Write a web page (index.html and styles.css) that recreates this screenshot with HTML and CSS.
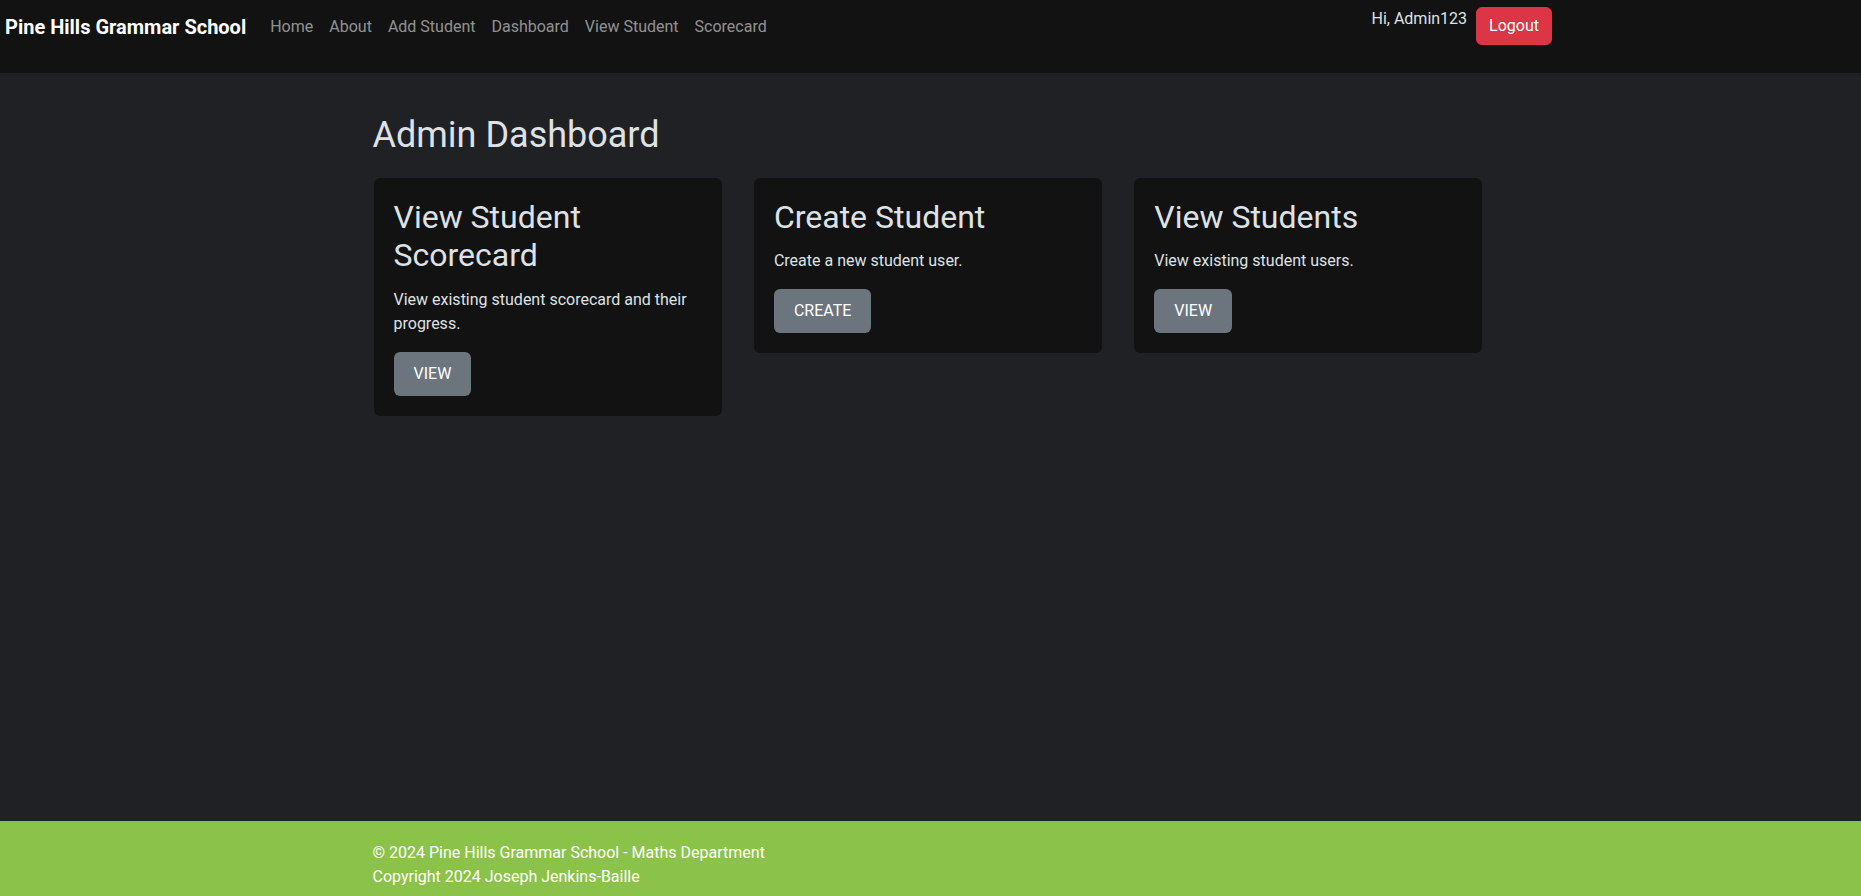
FILE: index.html
```html
<!DOCTYPE html>
<html lang="en">
<head>
<meta charset="utf-8">
<title>Admin Dashboard - Pine Hills Grammar School</title>
<link rel="stylesheet" href="styles.css">
</head>
<body>
<nav class="navbar">
  <a class="brand" href="#">Pine Hills Grammar School</a>
  <ul class="nav-links">
    <li><a href="#">Home</a></li>
    <li><a href="#">About</a></li>
    <li><a href="#">Add Student</a></li>
    <li><a href="#">Dashboard</a></li>
    <li><a href="#">View Student</a></li>
    <li><a href="#">Scorecard</a></li>
  </ul>
  <div class="user-area">
    <span class="greeting">Hi, Admin123</span>
    <button class="btn btn-danger">Logout</button>
  </div>
</nav>

<main class="main">
  <div class="container">
    <h1 class="page-title">Admin Dashboard</h1>
    <div class="card-grid">
      <div class="card">
        <h2 class="card-title">View Student Scorecard</h2>
        <p class="card-text">View existing student scorecard and their progress.</p>
        <a class="btn btn-secondary" href="#">VIEW</a>
      </div>
      <div class="card">
        <h2 class="card-title">Create Student</h2>
        <p class="card-text">Create a new student user.</p>
        <a class="btn btn-secondary" href="#">CREATE</a>
      </div>
      <div class="card">
        <h2 class="card-title">View Students</h2>
        <p class="card-text">View existing student users.</p>
        <a class="btn btn-secondary" href="#">VIEW</a>
      </div>
    </div>
  </div>
</main>

<footer class="footer">
  <div class="container">
    <p class="footer-line">&copy; 2024 Pine Hills Grammar School - Maths Department</p>
    <p class="footer-line">Copyright 2024 Joseph Jenkins-Baille</p>
  </div>
</footer>
</body>
</html>
```

FILE: styles.css
```css
* {
  box-sizing: border-box;
}

html, body {
  margin: 0;
  padding: 0;
}

body {
  min-height: 100vh;
  display: flex;
  flex-direction: column;
  background: #202124;
  color: #dee2e6;
  font-family: Roboto, "Liberation Sans", sans-serif;
  font-size: 16px;
  line-height: 1.5;
}

a {
  text-decoration: none;
}

/* Navbar */
.navbar {
  height: 73px;
  flex: 0 0 auto;
  background: #121212;
  display: flex;
  align-items: flex-start;
  padding: 6.5px 309px 0 5px;
}

.brand {
  font-size: 20px;
  font-weight: 700;
  line-height: 30px;
  padding-top: 5px;
  margin-right: 16px;
  color: #fff;
}

.nav-links {
  list-style: none;
  margin: 0;
  padding: 0;
  display: flex;
}

.nav-links a {
  display: block;
  padding: 8px 8px;
  line-height: 24px;
  color: rgba(255, 255, 255, 0.55);
}

.user-area {
  margin-left: auto;
  display: flex;
  align-items: flex-start;
  gap: 9px;
}

.greeting {
  line-height: 24px;
  color: #dee2e6;
}

.btn {
  display: inline-block;
  font-family: inherit;
  font-size: 16px;
  line-height: 24px;
  border-radius: 6px;
  cursor: pointer;
  color: #fff;
}

.btn-danger {
  background: #dc3545;
  border: 1px solid #dc3545;
  padding: 6px 12px;
}

.btn-secondary {
  background: #6c757d;
  border: 0;
  padding: 10px 20px;
}

/* Main */
.main {
  flex: 1 0 auto;
  padding-top: 41px;
}

.container {
  max-width: 1140px;
  margin: 0 auto;
  padding: 0 12px;
}

.page-title {
  margin: 0;
  font-size: 36px;
  font-weight: 400;
  line-height: 1.2;
  color: #dee2e6;
}

.card-grid {
  margin: 20.4px 0 0 1px;
  display: grid;
  grid-template-columns: repeat(3, 348px);
  column-gap: 32.4px;
  align-items: start;
}

.card {
  background: #121212;
  border-radius: 6px;
  padding: 20px 20px 20px;
}

.card-title {
  margin: 0 0 13.5px;
  font-size: 32px;
  font-weight: 400;
  line-height: 1.2;
  color: #dee2e6;
}

.card-text {
  margin: 0 0 16px;
  color: #dee2e6;
}

/* Footer */
.footer {
  flex: 0 0 auto;
  height: 75px;
  background: #8bc34a;
  color: #fff;
  padding-top: 20px;
}

.footer-line {
  margin: 0;
  line-height: 24px;
}
```
